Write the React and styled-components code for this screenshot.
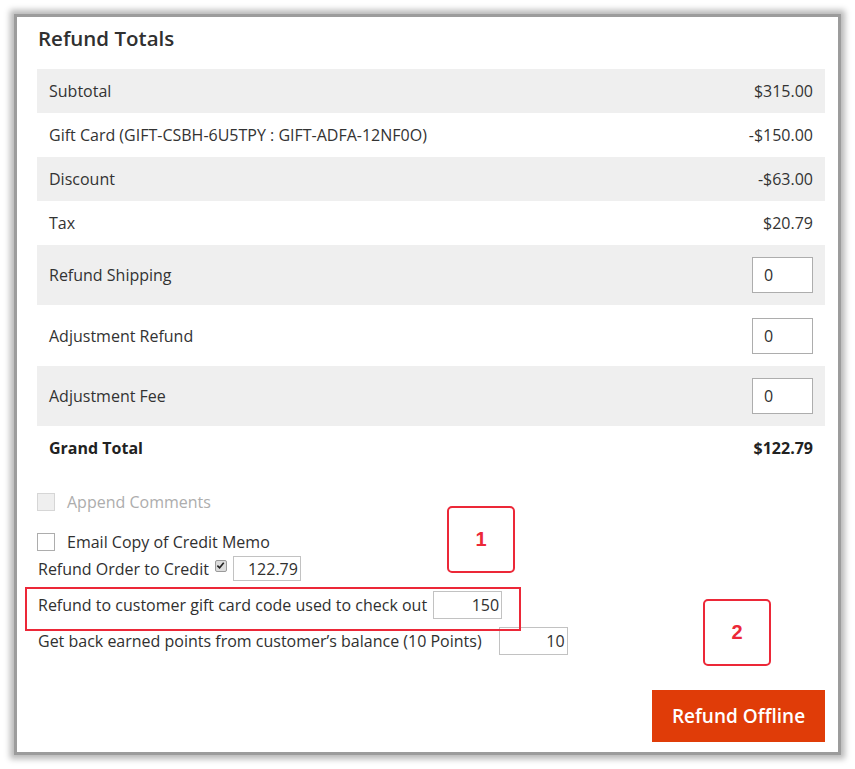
import styled, { createGlobalStyle } from "styled-components";

const GlobalStyle = createGlobalStyle`
  html, body {
    margin: 0;
    padding: 0;
    background: #ffffff;
  }
  body {
    font-family: "Open Sans", "Liberation Sans", sans-serif;
    color: #303030;
  }
`;

const Page = styled.div`
  width: 855px;
  height: 769px;
  padding: 17px;
  box-sizing: border-box;
`;

const Panel = styled.section`
  position: relative;
  width: 821px;
  height: 735px;
  box-sizing: border-box;
  padding: 8px 13px 0 20px;
  background: #fff;
  box-shadow: 0 0 0 3px #9c9c9c, 0 0 6px 7px rgba(0, 0, 0, 0.28);
`;

const Title = styled.h2`
  margin: 0 0 18px 1px;
  font-size: 20.5px;
  line-height: 26px;
  font-weight: 600;
  color: #303030;
`;

const Table = styled.div`
  display: flex;
  flex-direction: column;
`;

const Row = styled.div`
  display: flex;
  align-items: center;
  justify-content: space-between;
  height: ${(p) => p.$h || 44}px;
  padding: 0 12px;
  background: ${(p) => (p.$shade ? "#efefef" : "#fff")};
  font-size: 16px;
  font-weight: ${(p) => (p.$bold ? 700 : 400)};
  color: ${(p) => (p.$bold ? "#222" : "#333")};
`;

const AmountInput = styled.input`
  width: 61px;
  height: 36px;
  box-sizing: border-box;
  border: 1px solid #adadad;
  padding: 0 11px;
  font-family: inherit;
  font-size: 16px;
  color: #303030;
  background: #fff;
`;

const Options = styled.div`
  position: relative;
  display: flex;
  flex-direction: column;
  padding-top: 23px;
`;

const CheckRow = styled.label`
  display: flex;
  align-items: center;
  gap: 12px;
  height: 18px;
  margin-bottom: ${(p) => p.$mb || 0}px;
  font-size: 16px;
  color: ${(p) => (p.$disabled ? "#adadad" : "#303030")};
`;

const Box = styled.span`
  width: 18px;
  height: 18px;
  box-sizing: border-box;
  border: 1px solid ${(p) => (p.$disabled ? "#d6d6d6" : "#adadad")};
  background: ${(p) => (p.$disabled ? "#efefef" : "#fff")};
`;

const FieldRow = styled.div`
  display: flex;
  align-items: center;
  gap: ${(p) => p.$gap || 6}px;
  height: ${(p) => p.$h || 28}px;
  margin-left: 1px;
  margin-top: ${(p) => p.$mt || 0}px;
  font-size: 16px;
  color: #303030;
`;

const SmallInput = styled.input`
  width: ${(p) => p.$w || 69}px;
  height: ${(p) => p.$h || 28}px;
  box-sizing: border-box;
  border: 1px solid #c2c2c2;
  padding: 0 2px 0 4px;
  text-align: right;
  font-family: inherit;
  font-size: 16px;
  color: #303030;
  background: #fff;
`;

const MiniCheck = styled.span`
  display: inline-flex;
  align-items: center;
  justify-content: center;
  width: 12px;
  height: 12px;
  margin-top: -6px;
  border-radius: 2px;
  background: #dcdcdc;
  border: 1px solid #9a9a9a;
  box-sizing: border-box;
`;

const Highlight = styled.div`
  position: absolute;
  left: -12px;
  top: ${(p) => p.$top}px;
  width: 496px;
  height: 44px;
  box-sizing: border-box;
  border: 2px solid #ec2838;
  pointer-events: none;
`;

const Badge = styled.div`
  position: absolute;
  left: ${(p) => p.$left}px;
  top: ${(p) => p.$top}px;
  width: 68px;
  height: 67px;
  box-sizing: border-box;
  border: 2px solid #ec2838;
  border-radius: 5px;
  display: flex;
  align-items: center;
  justify-content: center;
  font-family: "Liberation Sans", Arial, sans-serif;
  font-weight: 700;
  font-size: 20px;
  color: #ec2838;
`;

const Footer = styled.div`
  display: flex;
  justify-content: flex-end;
  margin-top: 35px;
`;

const PrimaryButton = styled.button`
  width: 173px;
  height: 52px;
  border: none;
  background: #e03c08;
  color: #fff;
  font-family: inherit;
  font-size: 19px;
  font-weight: 600;
  cursor: pointer;
`;

const totals = [
  { label: "Subtotal", value: "$315.00" },
  { label: "Gift Card (GIFT-CSBH-6U5TPY : GIFT-ADFA-12NF0O)", value: "-$150.00" },
  { label: "Discount", value: "-$63.00" },
  { label: "Tax", value: "$20.79" },
];

const adjustments = [
  { label: "Refund Shipping", h: 60 },
  { label: "Adjustment Refund", h: 61 },
  { label: "Adjustment Fee", h: 60 },
];

export default function App() {
  return (
    <>
      <GlobalStyle />
      <Page>
        <Panel>
          <Title>Refund Totals</Title>
          <Table>
            {totals.map((t, i) => (
              <Row key={t.label} $shade={i % 2 === 0}>
                <span>{t.label}</span>
                <span>{t.value}</span>
              </Row>
            ))}
            {adjustments.map((a, i) => (
              <Row key={a.label} $h={a.h} $shade={i % 2 === 0}>
                <span>{a.label}</span>
                <AmountInput defaultValue="0" />
              </Row>
            ))}
            <Row $bold>
              <span>Grand Total</span>
              <span>$122.79</span>
            </Row>
          </Table>

          <Options>
            <CheckRow $disabled $mb={22}>
              <Box $disabled />
              Append Comments
            </CheckRow>
            <CheckRow>
              <Box />
              Email Copy of Credit Memo
            </CheckRow>
            <FieldRow $h={25} $mt={5}>
              <span>Refund Order to Credit</span>
              <MiniCheck>
                <svg width="9" height="9" viewBox="0 0 10 10">
                  <path d="M1.5 5.2 L4 7.6 L8.6 2" fill="none" stroke="#222" strokeWidth="1.8" />
                </svg>
              </MiniCheck>
              <SmallInput $h={25} $w={68} defaultValue="122.79" />
            </FieldRow>
            <FieldRow $mt={10}>
              <span>Refund to customer gift card code used to check out</span>
              <SmallInput defaultValue="150" />
            </FieldRow>
            <FieldRow $mt={8} $gap={17}>
              <span>Get back earned points from customer’s balance (10 Points)</span>
              <SmallInput defaultValue="10" />
            </FieldRow>
            <Highlight $top={117} />
            <Badge $left={410} $top={36}>1</Badge>
            <Badge $left={666} $top={129}>2</Badge>
            <Footer>
              <PrimaryButton>Refund Offline</PrimaryButton>
            </Footer>
          </Options>
        </Panel>
      </Page>
    </>
  );
}
